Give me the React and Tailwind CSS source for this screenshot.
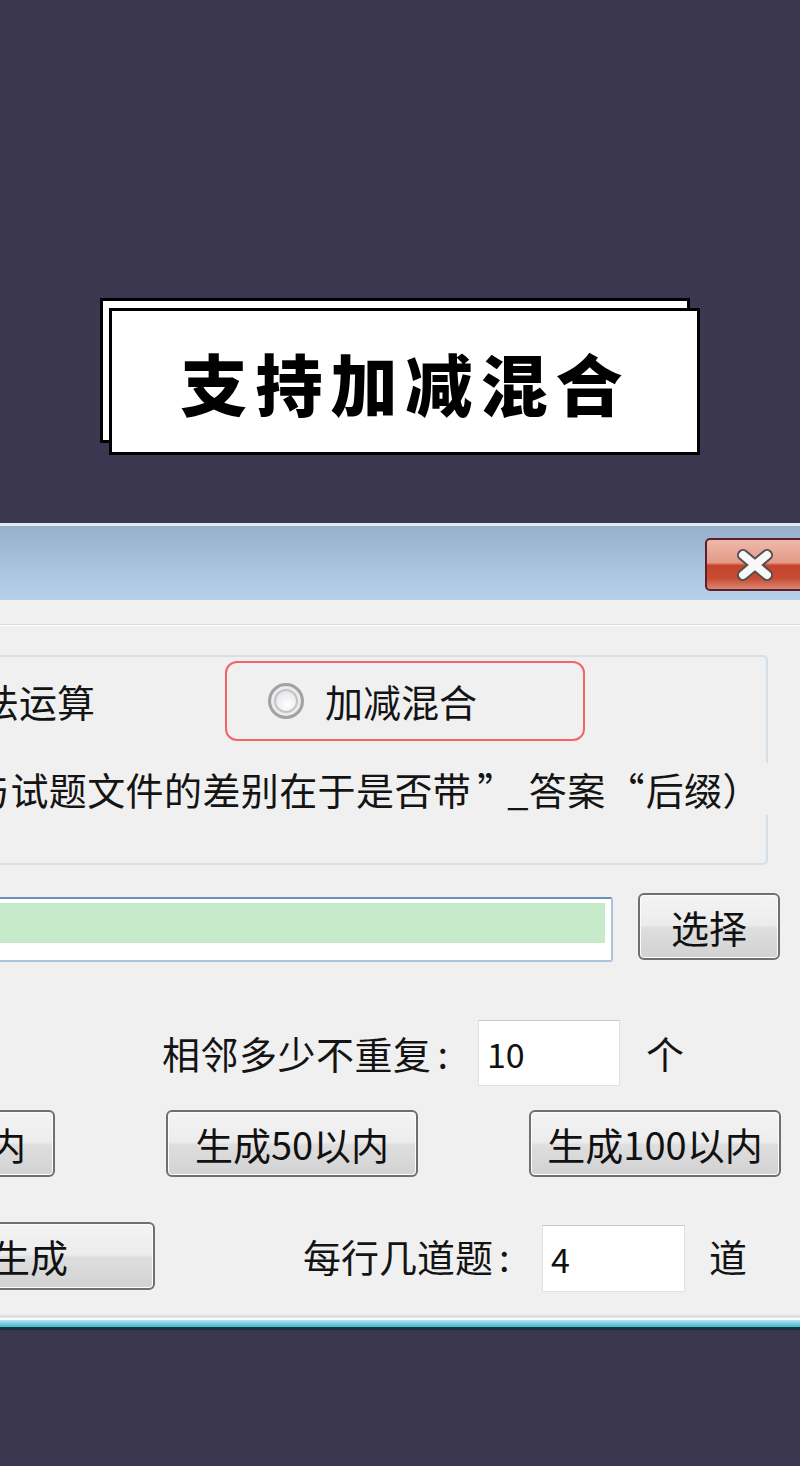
import React from 'react';

const btn =
  'flex items-center justify-center rounded-[6px] border-2 border-[#707070] bg-[linear-gradient(#f4f4f4_0%,#ececec_48%,#dedede_52%,#d2d2d2_100%)] shadow-[inset_0_0_0_1px_#fcfcfc] text-[38px] leading-none text-[#111] whitespace-nowrap';

const field =
  'flex items-center bg-white border border-[#e1e1e1] border-t-[#c9c9c9] pl-[8px] text-[34px] text-[#111]';

const Radio = () => (
  <div className="w-[36px] h-[36px] shrink-0 rounded-full border-[3px] border-[#a2a2a2] bg-[radial-gradient(circle_at_55%_62%,#ffffff_0%,#e9ecef_45%,#c9ced5_100%)] shadow-[inset_0_0_0_3px_#ececec,inset_0_0_0_5px_#c4c4c4]" />
);

const CloseGlyph = () => (
  <svg width="42" height="32" viewBox="0 0 42 32">
    <path d="M9 6 L33 26 M33 6 L9 26" stroke="#505050" strokeWidth="12" strokeLinecap="round" />
    <path d="M9 6 L33 26 M33 6 L9 26" stroke="#f8f8f8" strokeWidth="8" strokeLinecap="round" />
  </svg>
);

export default function App() {
  return (
    <div className="min-h-[1466px] w-[800px] overflow-hidden bg-[#3c3750] font-['Noto_Sans_CJK_SC','Noto_Sans',sans-serif]">
      {/* title card */}
      <div className="relative ml-[100px] mt-[298px] w-[600px] h-[157px]">
        <div className="absolute left-0 top-0 w-[590px] h-[145px] border-[3px] border-black bg-white" />
        <div className="relative ml-[9px] mt-[10px] inline-flex w-[591px] h-[147px] items-center justify-center border-[3px] border-black bg-white">
          <span className="text-[67px] font-black leading-none tracking-[8px] text-black pl-[2px]">支持加减混合</span>
        </div>
      </div>

      {/* dialog window, left side runs off the page */}
      <div className="-ml-[300px] mt-[68px] w-[1112px]">
        <div className="border-t-[3px] border-[#e3e9ef]">
          <div className="h-[74px] bg-[linear-gradient(#96b0cc,#a9c3de_55%,#b8d1ea)] pt-[12px]">
            <div className="ml-[1005px] flex w-[105px] h-[53px] items-center justify-center rounded-[5px] border-2 border-[#5b2030] bg-[linear-gradient(#f0b8aa_0%,#e39a88_46%,#c6442b_52%,#c64b33_78%,#dc8772_100%)] pr-[6px]">
              <CloseGlyph />
            </div>
          </div>
        </div>

        <div className="bg-[#f0f0f0] text-[#141414]">
          <div className="h-[24px]" />
          <div className="h-px bg-[#d9dfe5]" />
          <div className="h-px bg-white" />

          {/* group box */}
          <div className="ml-[20px] mt-[29px] w-[1048px] h-[210px] rounded-[5px] border-2 border-[#d5dfe7] pt-[4px]">
            <div className="flex items-center h-[80px]">
              <div className="ml-[163px]">
                <Radio />
              </div>
              <span className="ml-[22px] text-[38px] leading-none">减法运算</span>
              <div className="ml-[130px] flex w-[360px] h-[80px] items-center rounded-[12px] border-2 border-[#f2636a]">
                <div className="ml-[41px]">
                  <Radio />
                </div>
                <span className="ml-[21px] text-[38px] leading-none">加减混合</span>
              </div>
            </div>
            <div className="relative mt-[22px] -mr-[6px] flex h-[52px] items-center bg-[#f0f0f0]">
              <span className="ml-[58px] text-[38px] leading-none whitespace-nowrap tracking-[0.4px]">
                （答案文件与试题文件的差别在于是否带
                <span className="inline-block w-[36px] pl-[6px] text-left">”</span>
                _答案
                <span className="inline-block w-[40px] text-center">“</span>
                后缀）
              </span>
            </div>
          </div>

          {/* path field + choose */}
          <div className="mt-[28px] flex items-start">
            <div className="ml-[100px] mt-[4px] w-[813px] h-[65px] rounded-[3px] border-2 border-[#aac4e0] border-t-[#6d8fb8] bg-white pt-[4px] pr-[6px]">
              <div className="h-[40px] bg-[#c7ebca]" />
            </div>
            <div className={`${btn} ml-[25px] w-[142px] h-[67px]`}>选择</div>
          </div>

          {/* no repeat */}
          <div className="mt-[58px] flex items-center h-[66px]">
            <span className="ml-[462px] w-[316px] text-[38px] leading-none tracking-[0.5px]">
              相邻多少不重复<span className="ml-[6px]">:</span>
            </span>
            <div className={`${field} w-[142px] h-[66px]`}>10</div>
            <span className="ml-[26px] text-[38px] leading-none">个</span>
          </div>

          {/* range buttons */}
          <div className="mt-[24px] ml-[103px] flex gap-[111px]">
            <div className={`${btn} w-[252px] h-[67px]`}>生成20以内</div>
            <div className={`${btn} w-[252px] h-[67px]`}>生成50以内</div>
            <div className={`${btn} w-[252px] h-[67px]`}>生成100以内</div>
          </div>

          {/* per row */}
          <div className="mt-[45px] flex items-start h-[70px]">
            <div className={`${btn} ml-[129px] w-[326px] h-[68px]`}>随机生成</div>
            <span className="ml-[148px] mt-[14px] w-[239px] text-[38px] leading-[40px]">
              每行几道题<span className="ml-[6px]">:</span>
            </span>
            <div className={`${field} mt-[3px] w-[143px] h-[67px]`}>4</div>
            <span className="ml-[24px] mt-[14px] text-[38px] leading-[40px]">道</span>
          </div>
          <div className="h-[23px]" />
        </div>

        {/* bottom frame */}
        <div className="h-[3px] bg-[#dce2e7]" />
        <div className="h-[2px] bg-white" />
        <div className="h-[7px] bg-[linear-gradient(#b4e6f0,#3db8d4)]" />
        <div className="h-[3px] bg-[#17323a]" />
      </div>
    </div>
  );
}
